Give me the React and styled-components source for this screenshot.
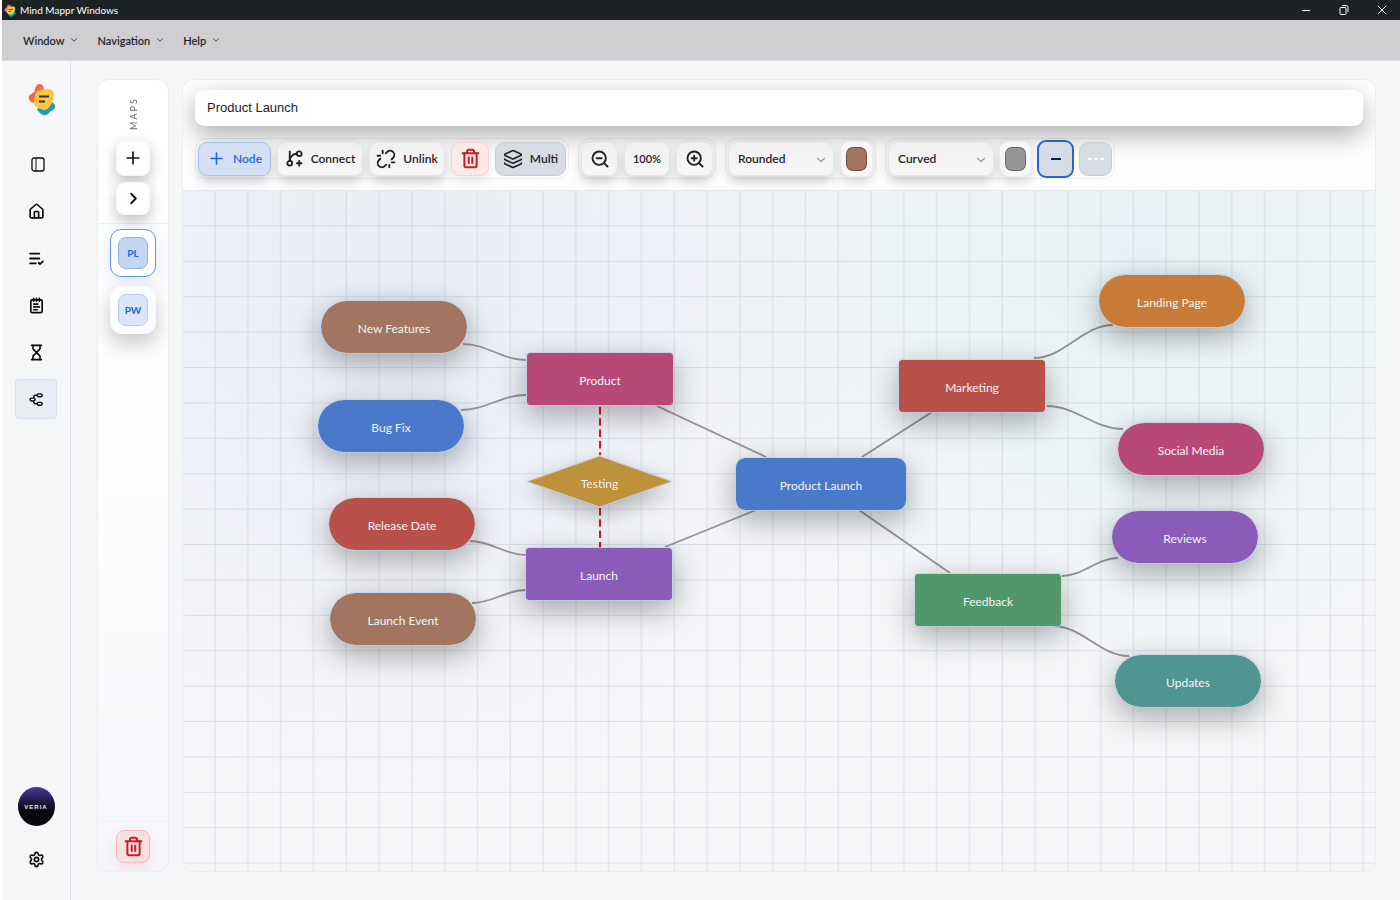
import React, { useState } from 'react'
import styled, { createGlobalStyle, css } from 'styled-components'
import {
  ChevronDown,
  ChevronRight,
  GitBranchPlus,
  Hourglass,
  House,
  Layers,
  ListCheck,
  NotepadText,
  Plus,
  Settings,
  Trash2,
  Unlink,
  ZoomIn,
  ZoomOut,
} from 'lucide-react'
import { RiMindMap } from 'react-icons/ri'

const GlobalStyle = createGlobalStyle`
  * { box-sizing: border-box; }
  html, body, #root { height: 100%; }
  body {
    margin: 0;
    background: #f5f6f8;
    color: #1f2329;
    font-family: Lato, 'Open Sans', sans-serif;
    font-size: 12px;
  }
  button, select, input { font: inherit; color: inherit; }
  button { cursor: pointer; }
`

const Page = styled.div`
  display: flex;
  flex-direction: column;
  min-height: 100vh;
  border-left: 2px solid #fdfdfd;
`

const TitleBar = styled.header`
  display: flex;
  align-items: center;
  height: 20px;
  padding: 0 12px 0 2px;
  gap: 4px;
  background: #1d2224;
  color: #fff;
  font-size: 10px;
`

const WindowButtons = styled.div`
  display: flex;
  gap: 26px;
  margin-left: auto;
`

const WindowButton = styled.button`
  display: flex;
  width: 12px;
  height: 12px;
  padding: 0;
  border: 0;
  background: none;
  color: #fff;
`

const MenuBar = styled.nav`
  display: flex;
  align-items: center;
  gap: 18px;
  height: 41px;
  padding: 0 21px;
  background: #cfcfd2;
  border-bottom: 1px solid #dcdde0;
`

const MenuButton = styled.button`
  display: flex;
  align-items: center;
  gap: 5px;
  padding: 0;
  border: 0;
  background: none;
  font-size: 11px;
  font-weight: 600;
`

const Body = styled.div`
  display: flex;
  flex: 1;
`

const Sidebar = styled.aside`
  display: flex;
  flex-direction: column;
  align-items: center;
  width: 69px;
  padding: 22px 0 21px;
  border-right: 1px solid #e0e2e8;
`

const LogoBox = styled.div`
  display: flex;
  margin: 0 0 28px 11px;
`

const SideList = styled.div`
  display: flex;
  flex-direction: column;
  gap: 7px;
`

const SideButton = styled.button`
  display: flex;
  align-items: center;
  justify-content: center;
  width: 42px;
  height: 40px;
  padding: 0;
  border: 1px solid ${(p) => (p.$active ? '#d8dfef' : 'transparent')};
  border-radius: 4px;
  background: ${(p) => (p.$active ? '#e8edf5' : 'none')};
  color: #0a0a0a;
`

const Avatar = styled.button`
  width: 37px;
  height: 39px;
  margin-top: auto;
  margin-bottom: 13px;
  padding: 0;
  border: 0;
  border-radius: 50%;
  background: linear-gradient(#4a3a9c, #15132c 45%, #08080d 65%);
  color: #e8e8f2;
  font-family: 'Liberation Sans', sans-serif;
  font-size: 6px;
  font-weight: 700;
  letter-spacing: 1px;
`

const Workspace = styled.main`
  display: flex;
  flex: 1;
  gap: 13px;
  min-width: 0;
  padding: 18px 24px 28px 26px;
`

const panel = css`
  border: 1px solid #ebedf1;
  border-radius: 12px;
  overflow: hidden;
`

const MapsPanel = styled.section`
  ${panel}
  display: flex;
  flex-direction: column;
  width: 72px;
  background: linear-gradient(#fff, #fdfdfe 50%, #f5f6fa);
`

const MapsHeader = styled.div`
  display: flex;
  flex-direction: column;
  align-items: center;
  gap: 6px;
  padding: 16px 0 8px;
  border-bottom: 1px solid #eef0f3;
`

const MapsTitle = styled.h2`
  margin: 0 0 4px 2px;
  height: 34px;
  writing-mode: vertical-rl;
  transform: rotate(180deg);
  font-size: 9px;
  font-weight: 500;
  line-height: 12px;
  letter-spacing: 2px;
  color: #6b7280;
`

const SquareButton = styled.button`
  display: flex;
  align-items: center;
  justify-content: center;
  width: 34px;
  height: ${(p) => (p.$tall ? 36 : 33)}px;
  padding: 0;
  border: 1px solid ${(p) => (p.$danger ? '#f1bdc3' : '#f6f6f7')};
  border-radius: 8px;
  background: ${(p) => (p.$danger ? '#f8dfe2' : '#fdfdfd')};
  color: ${(p) => (p.$danger ? '#c42026' : '#111418')};
  box-shadow: 0 6px 14px ${(p) => (p.$danger ? 'rgba(220, 60, 70, 0.12)' : 'rgba(0, 0, 0, 0.24)')};
`

const MapsList = styled.div`
  display: flex;
  flex: 1;
  flex-direction: column;
  align-items: center;
  gap: 9px;
  padding-top: 5px;
`

const MapCard = styled.button`
  display: flex;
  align-items: center;
  justify-content: center;
  width: 46px;
  height: 48px;
  padding: 0;
  border: 1px solid ${(p) => (p.$active ? '#5f98e8' : '#f8f9fc')};
  border-radius: 11px;
  background: ${(p) => (p.$active ? '#fff' : '#fbfcfe')};
  box-shadow: ${(p) =>
    p.$active ? '0 6px 22px rgba(60, 120, 230, 0.16)' : '0 9px 20px rgba(0, 0, 0, 0.22)'};
`

const MapBadge = styled.span`
  display: flex;
  align-items: center;
  justify-content: center;
  width: 30px;
  height: 32px;
  border: 1px solid ${(p) => (p.$active ? '#8fb2e8' : '#b5cbef')};
  border-radius: 8px;
  background: ${(p) => (p.$active ? '#c5d6f1' : '#dbe5f5')};
  color: #2268d0;
  font-size: 10px;
  font-weight: 700;
`

const MapsFooter = styled.div`
  display: flex;
  justify-content: center;
  padding: 8px 0;
  border-top: 1px solid #eef0f3;
`

const Editor = styled.section`
  ${panel}
  display: flex;
  flex: 1;
  flex-direction: column;
  min-width: 0;
`

const EditorHeader = styled.div`
  padding: 10px 12px 11px;
  border-bottom: 1px solid #e4e7eb;
  background: #fefefe;
`

const TitleInput = styled.input`
  display: block;
  width: 100%;
  height: 36px;
  padding: 0 12px 2px;
  border: 0;
  border-radius: 9px;
  outline: 0;
  background: #fff;
  box-shadow: 0 9px 26px rgba(0, 0, 0, 0.32);
  font-family: 'Liberation Sans', sans-serif;
  font-size: 13px;
`

const Toolbar = styled.div`
  display: flex;
  gap: 9px;
  margin-top: 12px;
`

const Group = styled.div`
  display: flex;
  align-items: center;
  gap: ${(p) => p.$gap || 6}px;
  height: 41px;
  padding: 0 2px;
  border: 1px solid rgba(0, 0, 0, 0.06);
  border-radius: 11px;
`

const tones = {
  plain: css`
    border-color: #e6e6e8;
    background: linear-gradient(#f0f0f0, #f7f7f7);
    box-shadow: 0 6px 12px rgba(0, 0, 0, 0.18);
  `,
  blue: css`
    border-color: #a9c3ee;
    background: #d3dff3;
    color: #2268d0;
    box-shadow: 0 6px 12px rgba(0, 0, 0, 0.18);
  `,
  red: css`
    border-color: #f9cfd1;
    background: #fce9ea;
    color: #c42026;
    box-shadow: 0 6px 12px rgba(0, 0, 0, 0.08);
  `,
  grey: css`
    border-color: #c9ced6;
    background: #d7dbe3;
  `,
  picked: css`
    height: 38px;
    border: 2px solid #1d66dc;
    background: #d7dbe4;
  `,
}

const ToolButton = styled.button`
  display: flex;
  align-items: center;
  justify-content: center;
  gap: 7px;
  width: ${(p) => p.$width}px;
  height: 34px;
  padding: 0;
  border: 1px solid;
  border-radius: 9px;
  font-size: ${(p) => (p.$small ? 11 : 12)}px;
  font-weight: 600;
  ${(p) => tones[p.$tone || 'plain']}
`

const SelectBox = styled.div`
  position: relative;
  display: flex;

  svg {
    position: absolute;
    right: 6px;
    top: 11px;
    color: #8f98a6;
    pointer-events: none;
  }
`

const Select = styled.select`
  width: 106px;
  height: 34px;
  padding: 0 9px;
  border: 1px solid;
  border-radius: 9px;
  appearance: none;
  font-weight: 600;
  ${tones.plain}
`

const Swatch = styled.input`
  width: 33px;
  height: 36px;
  padding: 5px;
  border: 1px solid #ececee;
  border-radius: 10px;
  appearance: none;
  background: #f7f7f7;
  box-shadow: 0 6px 12px rgba(0, 0, 0, 0.14);

  &::-webkit-color-swatch-wrapper {
    padding: 0;
  }
  &::-webkit-color-swatch {
    border: 1px solid rgba(0, 0, 0, 0.3);
    border-radius: 7px;
  }
`

const Canvas = styled.div`
  position: relative;
  flex: 1;
  overflow: hidden;
  background:
    radial-gradient(circle at 18% 12%, rgba(90, 140, 235, 0.09), transparent 46%),
    radial-gradient(circle at 80% 8%, rgba(50, 200, 210, 0.08), transparent 42%),
    #f5f6f8;
`

const Drawing = styled.svg`
  position: absolute;
  inset: 0;
  width: 100%;
  height: 100%;
`

const NodeBox = styled.button`
  position: absolute;
  width: ${(p) => p.$width}px;
  height: 54px;
  padding: 3px 0 0;
  border: 1px solid rgba(190, 210, 235, 0.7);
  border-radius: ${(p) => p.$radius}px;
  background: ${(p) => p.$color};
  background-clip: padding-box;
  color: #f4f4f6;
  box-shadow: 0 9px 30px rgba(0, 0, 0, 0.32);
`

const DiamondBox = styled.button`
  position: absolute;
  width: 147px;
  height: 53px;
  padding: 0;
  border: 0;
  background: none;
  color: #f4f4f6;
  filter: drop-shadow(0 8px 11px rgba(0, 0, 0, 0.28));

  svg {
    position: absolute;
    inset: 0;
  }
  span {
    position: relative;
    top: 2px;
  }
`

const sideItems = [
  { label: 'Home', icon: <House size={17} strokeWidth={2.3} /> },
  { label: 'Tasks', icon: <ListCheck size={17} strokeWidth={2.5} /> },
  { label: 'Notes', icon: <NotepadText size={17} strokeWidth={2.3} /> },
  { label: 'Timer', icon: <Hourglass size={17} strokeWidth={2.3} /> },
  { label: 'Mind maps', icon: <RiMindMap size={17} />, active: true },
]

const brown = '#a17560'
const blue = '#4a78ca'
const red = '#ba504a'
const pink = '#b84876'
const purple = '#885cb8'

// x / y are canvas coordinates of the top left corner
const nodes = [
  { label: 'New Features', x: 137, y: 109, color: brown, radius: 27 },
  { label: 'Bug Fix', x: 134, y: 208, color: blue, radius: 27 },
  { label: 'Release Date', x: 145, y: 306, color: red, radius: 27 },
  { label: 'Launch Event', x: 146, y: 401, color: brown, radius: 27 },
  { label: 'Product', x: 343, y: 161, color: pink, radius: 4 },
  { label: 'Launch', x: 342, y: 356, color: purple, radius: 4 },
  { label: 'Product Launch', x: 552, y: 266, color: blue, radius: 10, width: 172 },
  { label: 'Marketing', x: 715, y: 168, color: red, radius: 4 },
  { label: 'Feedback', x: 731, y: 382, color: '#519769', radius: 4 },
  { label: 'Landing Page', x: 915, y: 83, color: '#c87a37', radius: 27 },
  { label: 'Social Media', x: 934, y: 231, color: pink, radius: 27 },
  { label: 'Reviews', x: 928, y: 319, color: purple, radius: 27 },
  { label: 'Updates', x: 931, y: 463, color: '#519593', radius: 27 },
]

const curves = [
  [280, 153, 343, 169],
  [278, 219, 343, 204],
  [287, 350, 343, 364],
  [289, 412, 343, 399],
  [851, 167, 930, 134],
  [864, 215, 940, 238],
  [879, 385, 935, 367],
  [870, 435, 946, 465],
]

const lines = [
  [474, 215, 583, 266],
  [679, 266, 749, 221],
  [482, 356, 573, 319],
  [676, 319, 767, 382],
]

const curvePath = ([x1, y1, x2, y2]) => {
  const bend = (x2 - x1) * 0.38
  return `M${x1} ${y1} C${x1 + bend} ${y1} ${x2 - bend} ${y2} ${x2} ${y2}`
}

function Logo({ width, height }) {
  return (
    <svg width={width} height={height} viewBox="0 0 28 32" preserveAspectRatio="none" aria-hidden="true">
      <path
        d="M23 17c0 2 4 2 4 6 0 3-3 3-5 5-2 2-4 4-7 3-3-1-4-3-6-5l4-6z"
        fill="#19a0ae"
      />
      <path
        d="M7 6c0-3 3-5 5-5 3 0 3 3 4 5 2 2 2 5 0 7l-7 6c-3 1-7 0-8-3-1-4 1-4 3-6 2-1 3-2 3-4z"
        fill="#fb6650"
      />
      <path
        d="M10 8c4-2 8-2 12-2 3 0 4 3 4 6-1 4-1 6-3 9-2 3-5 6-8 5-3-1-6-2-8-4-2-3-1-6 0-9 0-2 1-4 3-5z"
        fill="#fdc743"
      />
      <path d="M11 13h10M11 18h6" stroke="#26343a" strokeWidth="2" />
    </svg>
  )
}

export default function App() {
  const [title, setTitle] = useState('Product Launch')
  const [nodeColor, setNodeColor] = useState(brown)
  const [lineColor, setLineColor] = useState('#969696')

  return (
    <>
      <GlobalStyle />
      <Page>
        <TitleBar>
          <Logo width={12} height={13} />
          <span>Mind Mappr Windows</span>
          <WindowButtons>
            <WindowButton aria-label="Minimize">
              <svg width="12" height="12" viewBox="0 0 12 12">
                <path d="M2 6.500h8" stroke="currentColor" />
              </svg>
            </WindowButton>
            <WindowButton aria-label="Restore">
              <svg width="12" height="12" viewBox="0 0 12 12" fill="none" stroke="currentColor">
                <rect x="2" y="3.500" width="6" height="7" rx="1" />
                <path d="M4 1.500h4a2 2 0 0 1 2 2V8" />
              </svg>
            </WindowButton>
            <WindowButton aria-label="Close">
              <svg width="12" height="12" viewBox="0 0 12 12">
                <path d="M2 2l8 8M10 2l-8 8" stroke="currentColor" />
              </svg>
            </WindowButton>
          </WindowButtons>
        </TitleBar>

        <MenuBar>
          {['Window', 'Navigation', 'Help'].map((item) => (
            <MenuButton key={item}>
              {item}
              <ChevronDown size={10} />
            </MenuButton>
          ))}
        </MenuBar>

        <Body>
          <Sidebar>
            <LogoBox>
              <Logo width={28} height={33} />
            </LogoBox>
            <SideList>
              <SideButton aria-label="Toggle sidebar">
                <svg width="20" height="16" viewBox="-4 0 20 16" fill="none" stroke="currentColor">
                  <rect x="2" y="2" width="12" height="13" rx="2" strokeWidth="1.300" />
                  <path d="M6 2v13" />
                </svg>
              </SideButton>
              {sideItems.map((item) => (
                <SideButton key={item.label} aria-label={item.label} $active={item.active}>
                  {item.icon}
                </SideButton>
              ))}
            </SideList>
            <Avatar>VERIA</Avatar>
            <SideButton aria-label="Settings">
              <Settings size={17} strokeWidth={2.3} />
            </SideButton>
          </Sidebar>

          <Workspace>
            <MapsPanel>
              <MapsHeader>
                <MapsTitle>MAPS</MapsTitle>
                <SquareButton $tall aria-label="New map">
                  <Plus size={20} />
                </SquareButton>
                <SquareButton aria-label="Expand maps">
                  <ChevronRight size={19} strokeWidth={2.3} />
                </SquareButton>
              </MapsHeader>
              <MapsList>
                <MapCard $active>
                  <MapBadge $active>PL</MapBadge>
                </MapCard>
                <MapCard>
                  <MapBadge>PW</MapBadge>
                </MapCard>
              </MapsList>
              <MapsFooter>
                <SquareButton $danger aria-label="Delete map">
                  <Trash2 size={21} strokeWidth={2.3} />
                </SquareButton>
              </MapsFooter>
            </MapsPanel>

            <Editor>
              <EditorHeader>
                <TitleInput
                  aria-label="Map title"
                  value={title}
                  onChange={(e) => setTitle(e.target.value)}
                />
                <Toolbar>
                  <Group>
                    <ToolButton $width={73} $tone="blue">
                      <Plus size={19} />
                      Node
                    </ToolButton>
                    <ToolButton $width={86}>
                      <GitBranchPlus size={19} strokeWidth={2.3} />
                      Connect
                    </ToolButton>
                    <ToolButton $width={76}>
                      <Unlink size={20} strokeWidth={2.3} />
                      Unlink
                    </ToolButton>
                    <ToolButton $width={38} $tone="red" aria-label="Delete">
                      <Trash2 size={21} strokeWidth={2.3} />
                    </ToolButton>
                    <ToolButton $width={71} $tone="grey">
                      <Layers size={20} />
                      Multi
                    </ToolButton>
                  </Group>
                  <Group>
                    <ToolButton $width={37} aria-label="Zoom out">
                      <ZoomOut size={20} strokeWidth={2.3} />
                    </ToolButton>
                    <ToolButton $width={46} $small>
                      100%
                    </ToolButton>
                    <ToolButton $width={37} aria-label="Zoom in">
                      <ZoomIn size={20} strokeWidth={2.3} />
                    </ToolButton>
                  </Group>
                  <Group>
                    <SelectBox>
                      <Select aria-label="Node shape" defaultValue="Rounded">
                        <option>Rounded</option>
                        <option>Square</option>
                        <option>Pill</option>
                        <option>Diamond</option>
                      </Select>
                      <ChevronDown size={14} />
                    </SelectBox>
                    <Swatch
                      type="color"
                      aria-label="Node color"
                      value={nodeColor}
                      onChange={(e) => setNodeColor(e.target.value)}
                    />
                  </Group>
                  <Group $gap={5}>
                    <SelectBox>
                      <Select aria-label="Line shape" defaultValue="Curved">
                        <option>Curved</option>
                        <option>Straight</option>
                      </Select>
                      <ChevronDown size={14} />
                    </SelectBox>
                    <Swatch
                      type="color"
                      aria-label="Line color"
                      value={lineColor}
                      onChange={(e) => setLineColor(e.target.value)}
                    />
                    <ToolButton $width={37} $tone="picked" aria-label="Solid line">
                      <svg width="10" height="2">
                        <path d="M0 1h10" stroke="#1f2329" strokeWidth="2" />
                      </svg>
                    </ToolButton>
                    <ToolButton $width={33} $tone="grey" aria-label="Dashed line">
                      <svg width="16" height="2">
                        <path d="M0 1h16" stroke="#f8f9fb" strokeWidth="2" strokeDasharray="4 2" />
                      </svg>
                    </ToolButton>
                  </Group>
                </Toolbar>
              </EditorHeader>

              <Canvas>
                <Drawing>
                  <defs>
                    <pattern id="grid" width="32.8" height="35.4" patternUnits="userSpaceOnUse">
                      <path d="M32 0V35.400M0 34.900H32.800" stroke="#7c8898" strokeOpacity="0.2" />
                    </pattern>
                  </defs>
                  <rect width="100%" height="100%" fill="url(#grid)" />
                  <g fill="none" stroke="#929292" strokeWidth="1.800">
                    {curves.map((c) => (
                      <path key={c.join()} d={curvePath(c)} />
                    ))}
                    {lines.map(([x1, y1, x2, y2]) => (
                      <path key={x1} d={`M${x1} ${y1}L${x2} ${y2}`} />
                    ))}
                  </g>
                  <path
                    d="M417 216v48M417 317v40"
                    stroke="#e01020"
                    strokeWidth="2"
                    strokeDasharray="7.500 3.800"
                  />
                </Drawing>
                {nodes.map((node) => (
                  <NodeBox
                    key={node.label}
                    $width={node.width || 148}
                    $radius={node.radius}
                    $color={node.color}
                    style={{ left: node.x, top: node.y }}
                  >
                    {node.label}
                  </NodeBox>
                ))}
                <DiamondBox style={{ left: 343, top: 264 }}>
                  <svg width="147" height="53" viewBox="0 0 147 53">
                    <path d="M1 26.500L73.500 1L146 26.500L73.500 52Z" fill="#be923b" stroke="#c3ccd6" />
                  </svg>
                  <span>Testing</span>
                </DiamondBox>
              </Canvas>
            </Editor>
          </Workspace>
        </Body>
      </Page>
    </>
  )
}
